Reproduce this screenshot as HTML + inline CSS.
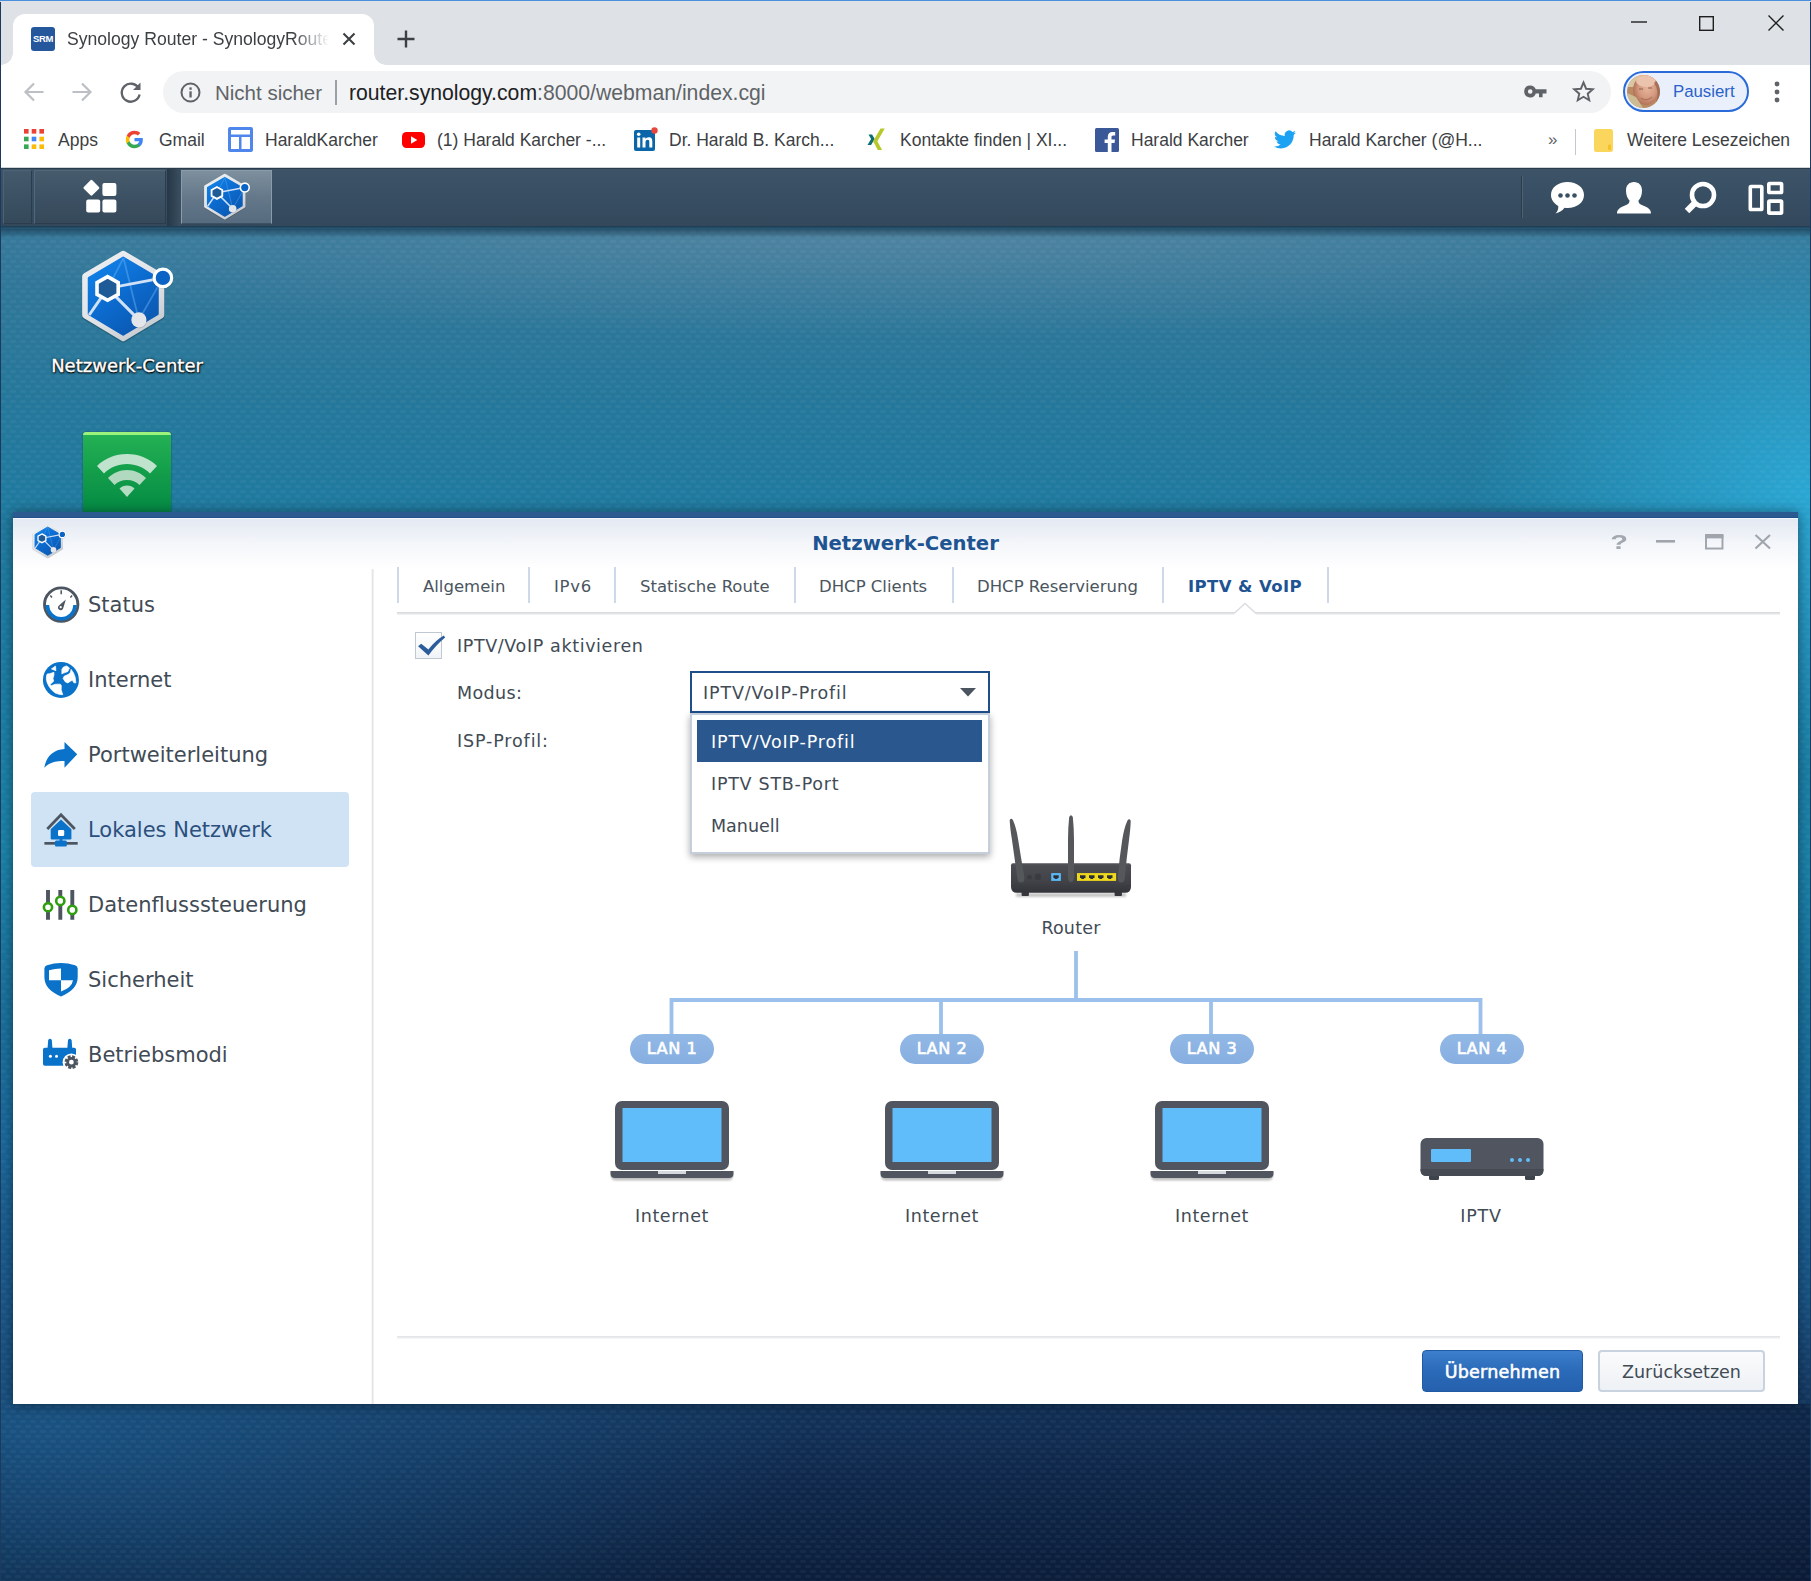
<!DOCTYPE html>
<html lang="de">
<head>
<meta charset="utf-8">
<title>Synology Router - SynologyRouter</title>
<style>
*{box-sizing:border-box;margin:0;padding:0}
html,body{width:1811px;height:1581px;overflow:hidden;background:#fff}
body{position:relative;font-family:"DejaVu Sans","Liberation Sans",sans-serif;color:#414b55}
.abs{position:absolute}
.ch{font-family:"Liberation Sans",sans-serif}
/* ---------- browser chrome ---------- */
#tabstrip{left:0;top:0;width:1811px;height:65px;background:#dee1e6;border-top:1px solid #4a8fdc}
#rightedge{right:0;top:2px;width:1px;height:1579px;background:#1c3a5e;z-index:50}
#leftedge{left:0;top:2px;width:1px;height:1579px;background:#1c3a5e;z-index:50}
#tab{left:13px;top:14px;width:361px;height:51px;background:#fff;border-radius:12px 12px 0 0}
#tab:before,#tab:after{content:"";position:absolute;bottom:0;width:12px;height:12px;background:radial-gradient(circle at 0 0,rgba(255,255,255,0) 11.5px,#fff 12px)}
#tab:before{left:-12px}
#tab:after{right:-12px;transform:scaleX(-1)}
#favicon{left:31px;top:27px;width:24px;height:24px;background:#25579c;border-radius:3px;color:#fff;font:bold 9.5px "Liberation Sans",sans-serif;text-align:center;line-height:24px;letter-spacing:-0.3px}
#tabtitle{left:67px;top:27px;width:265px;height:26px;overflow:hidden;white-space:nowrap;font-size:17.6px;line-height:24px;color:#3c4043;-webkit-mask-image:linear-gradient(90deg,#000 226px,transparent 262px);mask-image:linear-gradient(90deg,#000 226px,transparent 262px)}
#toolbar{left:0;top:65px;width:1811px;height:53px;background:#fff}
#omni{left:163px;top:71px;width:1448px;height:42px;border-radius:21px;background:#f1f3f4}
#bmbar{left:0;top:118px;width:1811px;height:50px;background:#fff;border-bottom:1px solid #d0d3d8}
.bm{top:128px;height:24px;line-height:24px;font-size:17.5px;color:#3c4043;white-space:nowrap}

/* chrome icons */
svg{position:absolute;overflow:visible}
#omnitxt1{left:215px;top:80px;font-size:20.5px;line-height:26px;color:#5f6368;white-space:nowrap}
#omnisep{left:335px;top:80px;width:2px;height:25px;background:#9aa0a6}
#omnitxt2{left:349px;top:80px;font-size:21.2px;line-height:26px;color:#202124;white-space:nowrap}
#omnitxt2 span{color:#5f6368}
#chip{left:1623px;top:71px;width:126px;height:41px;border:2px solid #2a6bd9;border-radius:21px;background:#e9effb}
#avatar{left:1627px;top:75px;width:33px;height:33px;border-radius:50%;background:radial-gradient(circle at 52% 42%,#e9b89a 0,#d99c7c 34%,#a8644a 52%,#7a5a48 70%,#c9b37a 100%);overflow:hidden}
#chiptxt{left:1673px;top:79px;font-size:16.800px;line-height:26px;color:#2a62c9;white-space:nowrap}
#bmsep{left:1575px;top:129px;width:1px;height:26px;background:#c4c7cc}
/* ---------- SRM taskbar ---------- */
#taskbar{left:0;top:168px;width:1811px;height:58px;background:linear-gradient(#3d5468,#384e62 50%,#33485b);border-top:1px solid #2a3b4a}
#taskshadow{left:0;top:226px;width:1811px;height:4px;background:linear-gradient(#1f3a4f,#2a6686)}

#tb0{left:3px;top:170px;width:29px;height:54px;background:linear-gradient(#44596b,#34495a);border:1px solid #4d6274;border-right-color:#2b3d4c;border-bottom-color:#2b3d4c}
#tb1{left:34px;top:170px;width:132px;height:54px;background:linear-gradient(#465b6c,#3b5062 55%,#35495a);border:1px solid #52687a;border-bottom-color:#2b3d4c;border-right-color:#2b3d4c}
#tbgap{left:167px;top:169px;width:14px;height:57px;background:linear-gradient(90deg,#263847,#3a4f61)}
#tb2{left:181px;top:170px;width:91px;height:54px;background:linear-gradient(#7e909e,#64788a 50%,#566b7d);border:1px solid #8a9ba9;border-bottom-color:#3c5163}
#tbsep{left:1521px;top:176px;width:2px;height:42px;background:linear-gradient(90deg,#2b3c4b 50%,#4d6274 50%)}
.dlabel{-webkit-text-stroke:.35px #fff;color:#fff;font-size:18px;line-height:22px;white-space:nowrap;text-shadow:0 1px 2px #000,0 0 3px rgba(0,0,0,.9),1px 1px 1px rgba(0,0,0,.8)}
#wifi{left:83px;top:432px;width:88px;height:83px;background:linear-gradient(#24b054,#109a49 55%,#048b44);border-top:3px solid #9df27c;border-radius:3px 3px 0 0;box-shadow:0 0 2px rgba(0,0,0,.4)}
/* ---------- desktop ---------- */
#desktop{left:0;top:229px;width:1811px;height:1352px;
background:
linear-gradient(rgba(14,40,62,.55),rgba(14,40,62,0) 9px),
radial-gradient(ellipse 3px 2px at 3px 2.5px,rgba(255,255,255,.04) 95%,rgba(255,255,255,0) 100%) 0 0/10px 10px,
radial-gradient(ellipse 3px 2px at 3px 2.5px,rgba(255,255,255,.04) 95%,rgba(255,255,255,0) 100%) 5px 5px/10px 10px,
linear-gradient(90deg,rgba(8,20,45,0) 30%,rgba(8,20,45,.42) 100%) 0 1175px/100% 177px no-repeat,
radial-gradient(ellipse 340px 280px at 1811px 265px,rgba(45,178,224,.8),rgba(45,178,224,0) 100%),
radial-gradient(ellipse 1000px 110px at 900px 0px,rgba(120,150,170,.42),rgba(120,150,170,0) 100%),
radial-gradient(ellipse 760px 300px at 40px 1200px,rgba(28,95,145,.7),rgba(28,95,145,0) 100%),
linear-gradient(180deg,#34789a 0px,#2f7799 70px,#25789b 170px,#1f7ba0 285px,#1a7ea4 470px,#1a82a8 620px,#18719b 770px,#19689a 920px,#185282 1070px,#14375f 1175px,#102b4f 1250px,#0c203d 1352px)}
/* ---------- window ---------- */
#win{left:13px;top:512px;width:1785px;height:892px;background:#fff;border-top:7px solid #2b5a90;box-shadow:0 1px 12px rgba(0,15,30,.55)}
#winhead{left:0;top:0;width:1785px;height:50px;background:linear-gradient(#e3e9f2,#f4f6fa 50%,#fff)}
#wintitle{left:0;top:12px;width:1785px;text-align:center;font-weight:bold;font-size:19.600px;line-height:26px;color:#1f5493}

#side{left:0;top:50px;width:359px;height:835px;background:#fff}
#sidediv{left:358px;top:50px;width:3px;height:835px;background:linear-gradient(90deg,#fff,#e3e5e8 50%,#f4f5f6)}
.si{left:75px;height:30px;line-height:30px;font-size:21px;color:#414b55;white-space:nowrap}
#sisel{left:18px;top:273px;width:318px;height:75px;background:#cfe3f5;border-radius:4px}
.tabs{top:54px;height:28px;line-height:28px;font-size:16.500px;color:#4a5560;white-space:nowrap}
.tsep{top:48px;width:2px;height:36px;background:#cdd8e8}
#tabline{left:384px;top:93px;width:1383px;height:3px;background:linear-gradient(#d4d7da,#e6e8ea 60%,#f6f7f8)}
#footline{left:384px;top:817px;width:1383px;height:3px;background:linear-gradient(#dfe1e4,#eceef0 60%,#f8f9fa)}
.lbl{font-size:17.500px;line-height:24px;color:#414b55;white-space:nowrap}

#cb{left:402px;top:113px;width:27px;height:27px;border:1.500px solid #bfc8d3;background:linear-gradient(#fff,#f1f4f7)}
#combo{left:677px;top:152px;width:300px;height:42px;border:2px solid #1f4e8c;background:#fff}
#ddl{left:677px;top:194px;width:300px;height:141px;background:#fff;border:2px solid #c5cfdb;box-shadow:0 3px 7px rgba(0,0,0,.33)}
#ddsel{left:684px;top:201px;width:285px;height:42px;background:#2a578e}
.pill{top:515px;width:84px;height:30px;border-radius:15px;background:linear-gradient(#92b8e5,#86aee0);color:#fff;-webkit-text-stroke:.6px #fff;font-size:16.200px;letter-spacing:.5px;line-height:30px;text-align:center;white-space:nowrap}
.dl{width:160px;text-align:center;font-size:17.500px;line-height:24px;color:#414b55;white-space:nowrap}
#btn1{left:1409px;top:831px;width:161px;height:42px;border-radius:4px;background:linear-gradient(#3d7fcc,#2a6ab8 50%,#2560ad);border:1px solid #1f5aa5;color:#fff;-webkit-text-stroke:.55px #fff;font-size:17.500px;letter-spacing:.2px;line-height:42px;text-align:center}
#btn2{left:1585px;top:831px;width:167px;height:42px;border-radius:4px;background:linear-gradient(#fafbfc,#eef1f5);border:2px solid #c9d3df;color:#414b55;font-size:17.500px;line-height:40px;text-align:center}
</style>
</head>
<body>
<!-- browser chrome -->
<div id="tabstrip" class="abs"></div>
<div id="tab" class="abs"></div>
<div id="favicon" class="abs">SRM</div>
<div id="tabtitle" class="abs ch">Synology Router - SynologyRouter</div>
<div id="toolbar" class="abs"></div>
<div id="omni" class="abs"></div>
<div id="bmbar" class="abs"></div>

<!-- tab controls -->
<svg class="abs" style="left:342px;top:32px" width="14" height="14" viewBox="0 0 14 14"><path d="M1.5 1.5L12.5 12.5M12.5 1.5L1.5 12.5" stroke="#3c4043" stroke-width="2.1" fill="none"/></svg>
<svg class="abs" style="left:397px;top:30px" width="18" height="18" viewBox="0 0 18 18"><path d="M9 0.5V17.5M0.5 9H17.5" stroke="#3c4043" stroke-width="2.4" fill="none"/></svg>
<svg class="abs" style="left:1631px;top:21px" width="16" height="2" viewBox="0 0 16 2"><path d="M0 1H16" stroke="#1f1f1f" stroke-width="1.4"/></svg>
<svg class="abs" style="left:1699px;top:16px" width="15" height="15" viewBox="0 0 15 15"><rect x="0.7" y="0.7" width="13.6" height="13.6" stroke="#1f1f1f" stroke-width="1.4" fill="none"/></svg>
<svg class="abs" style="left:1768px;top:15px" width="16" height="16" viewBox="0 0 16 16"><path d="M0.5 0.5L15.5 15.5M15.5 0.5L0.5 15.5" stroke="#1f1f1f" stroke-width="1.4" fill="none"/></svg>
<!-- nav icons -->
<svg class="abs" style="left:24px;top:82px" width="20" height="20" viewBox="0 0 20 20"><path d="M19.5 10H2.5M10 1.5L1.5 10L10 18.5" stroke="#bcc0c4" stroke-width="2.2" fill="none"/></svg>
<svg class="abs" style="left:72px;top:82px" width="20" height="20" viewBox="0 0 20 20"><path d="M0.5 10H17.5M10 1.5L18.5 10L10 18.5" stroke="#bcc0c4" stroke-width="2.2" fill="none"/></svg>
<svg class="abs" style="left:119px;top:80px" width="24" height="24" viewBox="0 0 24 24"><path d="M19.6 8.2A9 9 0 1 0 20.6 14.5" stroke="#5f6368" stroke-width="2.3" fill="none"/><path d="M21.5 2.5V10H14Z" fill="#5f6368"/></svg>
<!-- omnibox -->
<svg class="abs" style="left:180px;top:82px" width="21" height="21" viewBox="0 0 21 21"><circle cx="10.5" cy="10.5" r="9" stroke="#5f6368" stroke-width="2" fill="none"/><rect x="9.4" y="9.3" width="2.3" height="6.2" fill="#5f6368"/><rect x="9.4" y="5.4" width="2.3" height="2.4" fill="#5f6368"/></svg>
<div id="omnitxt1" class="abs ch">Nicht sicher</div>
<div id="omnisep" class="abs"></div>
<div id="omnitxt2" class="abs ch">router.synology.com<span>:8000/webman/index.cgi</span></div>
<svg class="abs" style="left:1524px;top:85px" width="23" height="13" viewBox="0 0 23 13"><path d="M6.2 0.4a6 6 0 1 0 5.6 8.2H15v3.6h3.6V8.6H22.5V4.2H11.8A6 6 0 0 0 6.2 0.4ZM6.2 4.2a2.3 2.3 0 1 1 0 4.6a2.3 2.3 0 0 1 0-4.6Z" fill="#5f6368" fill-rule="evenodd"/></svg>
<svg class="abs" style="left:1572px;top:80px" width="23" height="23" viewBox="0 0 24 24"><path d="M12 2.6l2.7 6.5 7 .6-5.3 4.6 1.6 6.9L12 17.5l-6 3.7 1.6-6.9L2.3 9.7l7-.6z" stroke="#5f6368" stroke-width="2" fill="none" stroke-linejoin="miter"/></svg>
<div id="chip" class="abs"></div>
<svg class="abs" style="left:1627px;top:75px" width="33" height="33" viewBox="0 0 33 33"><defs><clipPath id="avc"><circle cx="16.500" cy="16.500" r="16.500"/></clipPath><radialGradient id="avg" cx=".55" cy=".45" r=".6"><stop offset="0" stop-color="#e6b49a"/><stop offset=".55" stop-color="#d49a80"/><stop offset="1" stop-color="#a9694f"/></radialGradient></defs><g clip-path="url(#avc)"><rect width="33" height="33" fill="#b98a63"/><rect x="0" y="0" width="33" height="12" fill="#d8c7a0"/><ellipse cx="19" cy="15" rx="13" ry="15" fill="url(#avg)"/><ellipse cx="19" cy="6" rx="10" ry="6" fill="#ecc4ad"/><path d="M0 18L9 22L16 33H0Z" fill="#cdbb94"/><path d="M14 23Q19 27 25 22" stroke="#9a5a4a" stroke-width="1.300" fill="none" opacity=".55"/><path d="M12 14h4M21 13h4" stroke="#7a4a3c" stroke-width="1.500" opacity=".5"/><path d="M27 8Q33 16 29 27L33 33V0Z" fill="#8c5a48" opacity=".6"/></g></svg>
<div id="chiptxt" class="abs ch">Pausiert</div>
<svg class="abs" style="left:1774px;top:81px" width="6" height="22" viewBox="0 0 6 22"><circle cx="3" cy="3" r="2.4" fill="#5f6368"/><circle cx="3" cy="11" r="2.4" fill="#5f6368"/><circle cx="3" cy="19" r="2.4" fill="#5f6368"/></svg>
<!-- bookmarks -->
<svg class="abs" style="left:24px;top:129px" width="20" height="20" viewBox="0 0 20 20"><g><rect x="0" y="0" width="4.6" height="4.6" fill="#ea4335"/><rect x="7.7" y="0" width="4.6" height="4.6" fill="#ea4335"/><rect x="15.4" y="0" width="4.6" height="4.6" fill="#ea4335"/><rect x="0" y="7.7" width="4.6" height="4.6" fill="#34a853"/><rect x="7.7" y="7.7" width="4.6" height="4.6" fill="#4285f4"/><rect x="15.4" y="7.7" width="4.6" height="4.6" fill="#fbbc05"/><rect x="0" y="15.4" width="4.6" height="4.6" fill="#34a853"/><rect x="7.7" y="15.4" width="4.6" height="4.6" fill="#fbbc05"/><rect x="15.4" y="15.4" width="4.6" height="4.6" fill="#fbbc05"/></g></svg>
<div class="abs bm ch" style="left:58px">Apps</div>
<svg class="abs" style="left:125px;top:130px" width="19" height="19" viewBox="0 0 48 48"><path fill="#4285f4" d="M45.1 24.5c0-1.6-.1-3.100-.4-4.500H24v8.500h11.800c-.5 2.800-2.100 5.100-4.400 6.700v5.500h7.100c4.200-3.800 6.600-9.500 6.600-16.200z"/><path fill="#34a853" d="M24 46c5.900 0 10.900-2 14.500-5.300l-7.100-5.500c-2 1.300-4.500 2.100-7.400 2.100-5.700 0-10.500-3.800-12.300-9H4.400v5.700C8 41.100 15.400 46 24 46z"/><path fill="#fbbc05" d="M11.700 28.300c-.4-1.300-.7-2.800-.7-4.300s.3-2.900.7-4.300v-5.700H4.400C2.900 17 2 20.400 2 24s.9 7 2.400 10l7.300-5.700z"/><path fill="#ea4335" d="M24 10.700c3.200 0 6.100 1.100 8.400 3.300l6.300-6.300C34.900 4.200 29.900 2 24 2 15.400 2 8 6.900 4.400 14l7.300 5.700c1.800-5.200 6.600-9 12.300-9z"/></svg>
<div class="abs bm ch" style="left:159px">Gmail</div>
<svg class="abs" style="left:228px;top:127px" width="25" height="25" viewBox="0 0 25 25"><rect x="0" y="0" width="25" height="25" rx="2" fill="#4f86ec"/><rect x="3" y="3" width="19" height="4.5" fill="#fff"/><rect x="3" y="10" width="8" height="12" fill="#fff"/><rect x="13.5" y="10" width="8.500" height="12" fill="#fff"/></svg>
<div class="abs bm ch" style="left:265px">HaraldKarcher</div>
<svg class="abs" style="left:402px;top:132px" width="23" height="16" viewBox="0 0 23 16"><rect width="23" height="16" rx="4.500" fill="#ff0000"/><path d="M9 4.200L15.300 8L9 11.800Z" fill="#fff"/></svg>
<div class="abs bm ch" style="left:437px">(1) Harald Karcher -...</div>
<svg class="abs" style="left:634px;top:127px" width="24" height="24" viewBox="0 0 24 24"><rect x="0" y="3" width="21" height="21" rx="2" fill="#0a66a8"/><rect x="3.200" y="10.500" width="3" height="10" fill="#fff"/><circle cx="4.700" cy="7.300" r="1.800" fill="#fff"/><path d="M8.500 10.500h2.900v1.500c.6-1.100 1.900-1.800 3.400-1.800 3 0 3.500 2 3.500 4.300v6h-3v-5.300c0-1.300-.1-2.500-1.600-2.500s-2.200 1.100-2.200 2.500v5.300h-3z" fill="#fff"/><circle cx="20.500" cy="3.500" r="3.200" fill="#e8453c"/></svg>
<div class="abs bm ch" style="left:669px">Dr. Harald B. Karch...</div>
<svg class="abs" style="left:865px;top:128px" width="22" height="24" viewBox="0 0 22 24"><path d="M3.500 6.500h3.600l2.600 4.400-3.600 6.200H2.500l3.600-6.200z" fill="#0d6e72"/><path d="M15.500 0.500h4.300l-7.400 12.800 4.700 8.700h-4.300l-4.700-8.700z" fill="#b7c92a"/></svg>
<div class="abs bm ch" style="left:900px">Kontakte finden | XI...</div>
<svg class="abs" style="left:1095px;top:128px" width="24" height="24" viewBox="0 0 24 24"><rect width="24" height="24" rx="1.500" fill="#3b5998"/><path d="M16.500 24v-9h3l.5-3.600h-3.500V9.200c0-1 .3-1.800 1.800-1.800h1.900V4.200c-.3 0-1.500-.1-2.800-.1-2.800 0-4.600 1.700-4.600 4.700v2.600H9.600V15h3.200v9z" fill="#fff"/></svg>
<div class="abs bm ch" style="left:1131px">Harald Karcher</div>
<svg class="abs" style="left:1274px;top:130px" width="22" height="19" viewBox="0 0 24 20"><path d="M24 2.400a9.800 9.800 0 0 1-2.800.8A4.900 4.900 0 0 0 23.300.500a9.800 9.800 0 0 1-3.100 1.200 4.900 4.900 0 0 0-8.400 4.500A14 14 0 0 1 1.700 1 4.900 4.900 0 0 0 3.200 7.600a4.900 4.900 0 0 1-2.200-.6v.1a4.900 4.900 0 0 0 3.900 4.800 4.900 4.900 0 0 1-2.200.1 4.900 4.900 0 0 0 4.600 3.400A9.900 9.900 0 0 1 0 17.500a14 14 0 0 0 7.500 2.200c9.100 0 14-7.500 14-14v-.6A10 10 0 0 0 24 2.400z" fill="#1da1f2"/></svg>
<div class="abs bm ch" style="left:1309px">Harald Karcher (@H...</div>
<div class="abs bm ch" style="left:1548px;font-size:17px;color:#5f6368">»</div>
<div id="bmsep" class="abs"></div>
<svg class="abs" style="left:1594px;top:129px" width="19" height="23" viewBox="0 0 19 23"><path d="M2.500 0H16.500a2.500 2.500 0 0 1 2.500 2.500V20.500a2.500 2.500 0 0 1-2.500 2.500H2.500A2.500 2.500 0 0 1 0 20.500V2.500A2.500 2.500 0 0 1 2.500 0Z" fill="#fbd65c"/><rect x="14" y="15.500" width="3" height="5.500" rx="1" fill="#f6c02d"/></svg>
<div class="abs bm ch" style="left:1627px">Weitere Lesezeichen</div>
<!-- SRM -->
<div id="taskbar" class="abs"></div>
<div id="taskshadow" class="abs"></div>
<div id="desktop" class="abs"></div>
<svg width="0" height="0" style="position:absolute"><symbol id="hex" viewBox="78 247 98 98">
<defs><linearGradient id="hg" x1="0.1" y1="0" x2="0.8" y2="1"><stop offset="0" stop-color="#1184ea"/><stop offset="0.5" stop-color="#0c6bcf"/><stop offset="1" stop-color="#0b56ad"/></linearGradient>
<linearGradient id="hb" x1="0.2" y1="0" x2="0.8" y2="1"><stop offset="0" stop-color="#eceef0"/><stop offset="0.6" stop-color="#dfe2e5"/><stop offset="1" stop-color="#c4c9ce"/></linearGradient></defs>
<path d="M123.200 254L161 276.300V315.300L123.200 338L85.400 315.300V276.300Z" fill="#000" opacity=".18" stroke="#000" stroke-width="7" stroke-linejoin="round" transform="translate(0 1.200)"/>
<path d="M123.200 254L161 276.300V315.300L123.200 338L85.400 315.300V276.300Z" fill="url(#hb)" stroke="url(#hb)" stroke-width="6.500" stroke-linejoin="round"/>
<path d="M123.200 257.800L157.500 278V314L123.200 334.500L89 314V278Z" fill="url(#hg)" stroke="url(#hg)" stroke-width="2.500" stroke-linejoin="round"/>
<path d="M123.500 258L107.600 288.400M123.500 258L138.900 319.900L162.900 277.900" stroke="#5aa6f0" stroke-width="1.800" fill="none" opacity=".55"/>
<path d="M107.600 288.400L162.900 277.900M107.600 288.400L138.900 319.900M107.600 288.400L89.200 315" stroke="#cfe1f7" stroke-width="3" fill="none"/>
<path d="M107.600 276.600L118.200 282.600V294.400L107.600 300.300L97 294.400V282.600Z" fill="#1f5b96" stroke="#fff" stroke-width="3.600" stroke-linejoin="miter"/>
<circle cx="162.900" cy="278.500" r="10.600" fill="#000" opacity=".15"/>
<circle cx="162.900" cy="277.900" r="8.800" fill="#0b64c5" stroke="#fff" stroke-width="3.200"/>
<circle cx="139.200" cy="320.600" r="7.800" fill="#000" opacity=".15"/>
<circle cx="138.900" cy="319.900" r="7.600" fill="#e2e6ea"/>
</symbol></svg>
<div id="tb0" class="abs"></div>
<div id="tb1" class="abs"></div>
<div id="tbgap" class="abs"></div>
<div id="tb2" class="abs"></div>
<svg class="abs" style="left:82px;top:178px" width="36" height="36" viewBox="0 0 36 36"><rect x="-6" y="-6" width="12" height="12" rx="1.300" transform="translate(9.400 9.800) rotate(45)" fill="#fff"/><rect x="20.400" y="5" width="14" height="13" rx="2" fill="#fff"/><rect x="4.200" y="21.500" width="14" height="13" rx="2" fill="#fff"/><rect x="20.400" y="21.500" width="14" height="13" rx="2" fill="#fff"/></svg>
<svg class="abs" style="left:201.800px;top:171.900px" width="49.400" height="49.400"><use href="#hex"/></svg>
<div id="tbsep" class="abs"></div>
<!-- tray icons -->
<svg class="abs" style="left:1550px;top:181px" width="35" height="34" viewBox="0 0 35 34"><path d="M17.500 1C27 1 34 6.500 34 14C34 21.500 27 27 17.500 27C16.500 27 15.500 26.900 14.500 26.800C12.500 29.500 9.500 31.500 5.500 32.500C7.500 30.500 8.500 28 8.300 25C3.800 22.500 1 18.500 1 14C1 6.500 8 1 17.500 1Z" fill="#fff"/><circle cx="10.500" cy="14.500" r="2.300" fill="#3a5063"/><circle cx="17.500" cy="14.500" r="2.300" fill="#3a5063"/><circle cx="24.500" cy="14.500" r="2.300" fill="#3a5063"/></svg>
<svg class="abs" style="left:1616px;top:181px" width="36" height="33" viewBox="0 0 36 33"><path d="M18 1C23 1 26 4.500 26 9.500C26 14 24.500 17.500 22.500 19.500C22.500 22 23.500 23 27 24.500C32 26.500 35 28.500 35 32.500H1C1 28.500 4 26.500 9 24.500C12.500 23 13.500 22 13.500 19.500C11.500 17.500 10 14 10 9.500C10 4.500 13 1 18 1Z" fill="#fff"/></svg>
<svg class="abs" style="left:1682px;top:180px" width="36" height="36" viewBox="0 0 36 36"><circle cx="21" cy="15" r="11" stroke="#fff" stroke-width="4.600" fill="none"/><path d="M13 23L5 31" stroke="#fff" stroke-width="6.400" stroke-linecap="butt"/></svg>
<svg class="abs" style="left:1747px;top:180px" width="38" height="36" viewBox="1747 180 38 36"><rect x="1750.300" y="186.500" width="11.500" height="23" rx=".8" stroke="#fff" stroke-width="3.600" fill="none"/><rect x="1768.800" y="183.500" width="12.800" height="9" rx=".8" stroke="#fff" stroke-width="3.600" fill="none"/><rect x="1768.800" y="201.100" width="12.800" height="12" rx=".8" stroke="#fff" stroke-width="3.600" fill="none"/></svg>
<!-- desktop icons -->
<svg class="abs" style="left:78px;top:247px" width="98" height="98"><use href="#hex"/></svg>
<div class="abs dlabel" style="left:27px;top:355px;width:200px;text-align:center">Netzwerk-Center</div>
<div id="wifi" class="abs"></div>
<svg class="abs" style="left:96px;top:452px" width="62" height="46" viewBox="0 0 62 46"><path d="M31 2C43 2 53.500 6.500 61 14L54 21.500C48 15.500 40 12 31 12C22 12 14 15.500 8 21.500L1 14C8.500 6.500 19 2 31 2Z" fill="#bfe3cc"/><path d="M31 18C38.500 18 45 21 50 26L43.500 33C40 29.500 36 28 31 28C26 28 22 29.500 18.500 33L12 26C17 21 23.500 18 31 18Z" fill="#b0d9c0"/><path d="M31 33.500Q35.500 33.500 38.500 36.500L31 45L23.500 36.500Q26.500 33.500 31 33.500Z" fill="#b4dcc3"/></svg>

<div id="win" class="abs">
  <div id="winhead" class="abs"></div>
  <div class="abs" style="left:0;top:-2px;width:1785px;height:1px;background:#214f89"></div><div class="abs" style="left:0;top:-1px;width:1785px;height:1px;background:#f4f6fa"></div>
  <div id="wintitle" class="abs">Netzwerk-Center</div>
  <svg class="abs" style="left:17.900px;top:3.900px" width="36.200" height="36.200"><use href="#hex"/></svg>
  <!-- window controls -->
  <div class="abs" style="left:1599px;top:11px;width:14px;text-align:center;font-size:20px;font-weight:bold;line-height:24px;color:#a3a8b0;font-family:'Liberation Sans',sans-serif;transform:scaleX(1.45)">?</div>
  <svg class="abs" style="left:1643px;top:21px" width="19" height="3" viewBox="0 0 19 3"><rect width="19" height="2.600" fill="#a0a5ad"/></svg>
  <svg class="abs" style="left:1691.500px;top:15px" width="18.500" height="15.500" viewBox="0 0 19 16"><rect x="1" y="2" width="17" height="13" stroke="#a0a5ad" stroke-width="2" fill="none"/><rect x="0" y="0" width="19" height="4.500" fill="#a0a5ad"/></svg>
  <svg class="abs" style="left:1740.500px;top:15px" width="17.500" height="15.500" viewBox="0 0 17 16"><path d="M1 1L16 15M16 1L1 15" stroke="#a0a5ad" stroke-width="2.200" fill="none"/></svg>
  <!-- sidebar -->
  <div id="side" class="abs"></div>
  <div id="sidediv" class="abs"></div>
  <div id="sisel" class="abs"></div>
  <div class="abs si" style="top:71px">Status</div>
  <div class="abs si" style="top:146px">Internet</div>
  <div class="abs si" style="top:221px">Portweiterleitung</div>
  <div class="abs si" style="top:296px;color:#2c4f7c">Lokales Netzwerk</div>
  <div class="abs si" style="top:371px">Datenflusssteuerung</div>
  <div class="abs si" style="top:446px">Sicherheit</div>
  <div class="abs si" style="top:521px">Betriebsmodi</div>
  <!-- sidebar icons -->
<svg class="abs" style="left:28px;top:66px" width="40" height="40" viewBox="41 585 40 40"><circle cx="61.200" cy="604.600" r="16.700" stroke="#4d5660" stroke-width="2.900" fill="#fff"/><path d="M47.400 605A13.800 13.800 0 0 0 75 605" stroke="#0a72c9" stroke-width="3.700" fill="none"/><path d="M61.200 590.200V594.300M50.300 595.600L52 597.500M72.100 595.600L70.400 597.500" stroke="#4d5660" stroke-width="1.500"/><path d="M65.800 599.500L63.300 608a2.700 2.700 0 1 1-4.300-2.600Z" fill="#4d5660"/><circle cx="60.700" cy="607.200" r="1.100" fill="#fff"/></svg>
<svg class="abs" style="left:28px;top:141px" width="40" height="40" viewBox="41 660 40 40"><circle cx="60.93" cy="679.98" r="18" fill="#0a72c9"/><g fill="#fff" stroke="#fff" stroke-width=".7" stroke-linejoin="round"><path d="M51.45 668.92L55.56 666.07L55.87 670.65Z"/><path d="M47.18 673.98L49.55 673.66L53.98 672.33L53.91 675.24L52.96 678.72L53.72 680.93L52.08 682.83L50.12 684.25L51.13 685.74L55.24 684.25L60.30 684.16L61.31 685.52L61.19 689.79L62.77 694.69L59.04 694.37L55.24 692.95L51.76 690.10L48.92 686.31L47.18 682.83L46.32 679.04L46.54 675.87Z"/><path d="M61.88 673.98L61.88 669.23L63.46 667.02L66.63 665.91L69.47 667.97L68.59 669.86L67.89 671.51L63.46 673.09Z"/><path d="M71.05 669.39L73.43 672.71L75.16 677.14L75.86 682.83L73.96 682.83L72.32 680.30L70.74 681.00L67.89 682.89L65.36 681.88L63.08 678.47L64.10 676.25L68.52 674.35L70.48 672.24Z"/></g></svg>
<svg class="abs" style="left:29px;top:219px" width="40" height="34" viewBox="42 738 40 34"><path d="M64.500 742.100L77.200 754.300L64.500 767.800V761C55 760.500 49 763 44.300 767.700C46 757 53 749.500 64.500 749Z" fill="#0a72c9"/></svg>
<svg class="abs" style="left:29px;top:291px" width="40" height="40" viewBox="42 810 40 40"><path d="M47.300 828.900L61 814.800L74.800 828.900" stroke="#4d5660" stroke-width="2.800" fill="none"/><path d="M50.700 829.200L61 819.600L71.400 829.200V838.200Q71.400 839.600 70 839.600H52.100Q50.700 839.600 50.700 838.200Z" fill="#0a72c9"/><rect x="58" y="830" width="6.200" height="6" rx="1.300" fill="#fff"/><rect x="44.400" y="842" width="33.300" height="2.700" fill="#4d5660"/><rect x="59.600" y="839" width="2.800" height="3.500" fill="#0a72c9"/><rect x="54.900" y="840.600" width="12" height="6" rx="1.500" fill="#0a72c9"/></svg>
<svg class="abs" style="left:27px;top:367px" width="40" height="38" viewBox="40 886 40 38"><path d="M48 890V919.800M60.300 890V919.800M72.300 890V919.800" stroke="#4d5660" stroke-width="3.900"/><circle cx="48" cy="907.200" r="4.100" fill="#fff" stroke="#2f9e0f" stroke-width="2.600"/><circle cx="60.300" cy="900.900" r="4.100" fill="#fff" stroke="#2f9e0f" stroke-width="2.600"/><circle cx="72.300" cy="909.900" r="4.100" fill="#fff" stroke="#2f9e0f" stroke-width="2.600"/></svg>
<svg class="abs" style="left:29px;top:441px" width="40" height="40" viewBox="42 960 40 40"><path d="M44.400 968.500Q44.400 966 47 965.300Q54 963 61 963Q68 963 75.100 965.300Q77.700 966 77.700 968.500V977C77.700 986 71.500 992 61 996.400C50.600 992 44.400 986 44.400 977Z" fill="#0a72c9"/><path d="M49 970.300Q55 968.600 61 968.600V980.300H49Z" fill="#fff"/><path d="M61 980.300H73Q72 987.500 61 991.600Z" fill="#fff"/></svg>
<svg class="abs" style="left:28px;top:517px" width="40" height="36" viewBox="41 1036 40 36"><path d="M48.200 1040Q50 1037.500 51.800 1040L52.600 1050H47.400Z" fill="#0a72c9"/><path d="M68 1040Q69.800 1037.500 71.600 1040L72.400 1050H67.200Z" fill="#0a72c9"/><rect x="43" y="1047.700" width="33" height="18.100" rx="1.800" fill="#0a72c9"/><circle cx="50.400" cy="1056.200" r="1.500" fill="#fff"/><circle cx="56.500" cy="1056.200" r="1.500" fill="#fff"/><circle cx="71.400" cy="1062.200" r="8.800" fill="#fff"/><circle cx="71.400" cy="1062.200" r="5.600" stroke="#4d5660" stroke-width="2.600" fill="none" stroke-dasharray="2.930 1.470" /><circle cx="71.400" cy="1062.200" r="3.800" stroke="#4d5660" stroke-width="2.800" fill="#fff"/></svg>
  <!-- tabs -->
  <div class="abs tsep" style="left:384px"></div>
  <div class="abs tabs" style="left:410px">Allgemein</div>
  <div class="abs tsep" style="left:515px"></div>
  <div class="abs tabs" style="left:541px;letter-spacing:.7px">IPv6</div>
  <div class="abs tsep" style="left:601px"></div>
  <div class="abs tabs" style="left:627px">Statische Route</div>
  <div class="abs tsep" style="left:781px"></div>
  <div class="abs tabs" style="left:806px">DHCP Clients</div>
  <div class="abs tsep" style="left:939px"></div>
  <div class="abs tabs" style="left:964px">DHCP Reservierung</div>
  <div class="abs tsep" style="left:1149px"></div>
  <div class="abs tabs" style="left:1175px;font-weight:bold;color:#1f5493;letter-spacing:.4px">IPTV &amp; VoIP</div>
  <div class="abs tsep" style="left:1314px"></div>
  <div id="tabline" class="abs"></div>
  <svg class="abs" style="left:1221px;top:84px" width="22" height="12" viewBox="0 0 22 12"><path d="M0 10.500L11 0.500L22 10.500V12H0Z" fill="#fff"/><path d="M0 10.500L11 0.500L22 10.500" stroke="#d9dcdf" stroke-width="1.400" fill="none"/></svg>
  <div id="footline" class="abs"></div>
  <svg width="0" height="0" style="position:absolute"><symbol id="laptop" viewBox="0 0 124 82"><defs><filter id="lsh" x="-5%" y="-5%" width="110%" height="120%"><feGaussianBlur stdDeviation="0.800"/></filter></defs>
<path d="M1 71H123V74Q123 79 118 79H6Q1 79 1 74Z" fill="#000" opacity=".25" filter="url(#lsh)" transform="translate(0 1.500)"/>
<rect x="5" y="1" width="114" height="69" rx="7" fill="#50555f"/>
<rect x="12.500" y="8" width="99" height="54" fill="#61bcfa"/>
<path d="M0.500 71H123.500V73.500Q123.500 78 119 78H5Q0.500 78 0.500 73.500Z" fill="#50555f"/>
<rect x="48" y="71" width="28" height="3" fill="#d5d8dc"/></symbol></svg>
  <!-- form -->
  <div id="cb" class="abs"></div>
  <svg class="abs" style="left:402px;top:113px" width="34" height="28" viewBox="415 632 34 28"><path d="M418.100 646.300L421.200 643.700L428.400 649.600Q435.300 640.300 443.900 635.500L445.100 637.400Q435.300 645.600 428.400 655.500Z" fill="#2b5c9b"/></svg>
  <div class="abs lbl" style="left:444px;top:115px;letter-spacing:.62px">IPTV/VoIP aktivieren</div>
  <div class="abs lbl" style="left:444px;top:162px;letter-spacing:.4px">Modus:</div>
  <div class="abs lbl" style="left:444px;top:210px;letter-spacing:.87px">ISP-Profil:</div>
  <div id="combo" class="abs"></div>
  <div class="abs lbl" style="left:690px;top:162px;letter-spacing:.85px">IPTV/VoIP-Profil</div>
  <svg class="abs" style="left:947px;top:169px" width="16" height="9" viewBox="0 0 16 9"><path d="M0 0H16L8 8.500Z" fill="#4a5560"/></svg>
  <div id="ddl" class="abs"></div>
  <div id="ddsel" class="abs"></div>
  <div class="abs lbl" style="left:698px;top:211px;color:#fff;letter-spacing:.85px">IPTV/VoIP-Profil</div>
  <div class="abs lbl" style="left:698px;top:253px;letter-spacing:.73px">IPTV STB-Port</div>
  <div class="abs lbl" style="left:698px;top:295px">Manuell</div>
  <!-- router -->
  <svg class="abs" style="left:996px;top:294px" width="124" height="88" viewBox="1009 813 124 88">
    <defs><linearGradient id="rb" x1="0" y1="0" x2="0" y2="1"><stop offset="0" stop-color="#53565c"/><stop offset=".1" stop-color="#4a4c52"/><stop offset=".6" stop-color="#414349"/><stop offset="1" stop-color="#33343a"/></linearGradient>
    <filter id="rsh" x="-10%" y="-100%" width="120%" height="300%"><feGaussianBlur stdDeviation="1.200"/></filter></defs>
    <rect x="1016" y="893" width="110" height="4" fill="#000" opacity=".22" filter="url(#rsh)"/>
    <rect x="1021.600" y="890" width="7.300" height="6" rx=".8" fill="#36373c"/><rect x="1114.600" y="890" width="7.300" height="6" rx=".8" fill="#36373c"/>
    <path d="M1011 865.200Q1011 863.200 1013 863.200H1129Q1131 863.200 1131 865.200V886.800Q1131 892.800 1125 892.800H1017Q1011 892.800 1011 886.800Z" fill="url(#rb)"/>
    <path d="M1009.700 820Q1011.300 817.500 1012.900 820Q1016.500 828 1018.200 840Q1021 858 1024.400 877Q1024.800 882.500 1021 882.500Q1017.600 882.500 1017.200 877Q1014.500 858 1012 840Q1010 828 1009.700 820Z" fill="#55575b"/>
    <path d="M1069.200 817Q1071 813.500 1072.800 817Q1074 828 1074 840V877Q1074 882 1071 882Q1068 882 1068 877V840Q1068 828 1069.200 817Z" fill="#55575b"/>
    <path d="M1130.700 820.500Q1129.100 818 1127.500 820.500Q1124 828 1122.200 840Q1119.400 858 1117.800 877Q1117.400 882.500 1121.200 882.500Q1124.600 882.500 1125 877Q1126.500 858 1129 840Q1130.600 828 1130.700 820.500Z" fill="#55575b"/>
    <circle cx="1029.600" cy="877.300" r="2.300" fill="#3a3b40"/><rect x="1035" y="873.800" width="5.800" height="6.200" rx="1.500" fill="#3a3b40"/>
    <rect x="1051.200" y="873.100" width="9.700" height="7.800" fill="#5bb8f5"/><path d="M1053.400 875.200H1058.700V878H1057.400V879H1054.700V878H1053.400Z" fill="#2b2d35"/>
    <rect x="1077" y="873.100" width="39.100" height="7.800" fill="#efd91c"/>
    <g fill="#2b2d35"><path d="M1080 875.200H1085.500V878H1084.200V879H1081.300V878H1080Z"/><path d="M1089 875.200H1094.500V878H1093.200V879H1090.300V878H1089Z"/><path d="M1098 875.200H1103.500V878H1102.200V879H1099.300V878H1098Z"/><path d="M1107 875.200H1112.500V878H1111.200V879H1108.300V878H1107Z"/></g>
  </svg>
  <div class="abs dl" style="left:978px;top:397px;letter-spacing:.2px">Router</div>
  <!-- lines -->
  <svg class="abs" style="left:650px;top:430px" width="840" height="96" viewBox="0 0 840 96"><path d="M413 2V51M8.500 94V51H817.500V94M278 51V94M548 51V94" stroke="#9cc0ec" stroke-width="3.800" fill="none"/></svg>
  <div class="abs pill" style="left:617px">LAN 1</div>
  <div class="abs pill" style="left:887px">LAN 2</div>
  <div class="abs pill" style="left:1157px">LAN 3</div>
  <div class="abs pill" style="left:1427px">LAN 4</div>
  <svg class="abs" style="left:597px;top:581px" width="124" height="82"><use href="#laptop"/></svg>
  <svg class="abs" style="left:867px;top:581px" width="124" height="82"><use href="#laptop"/></svg>
  <svg class="abs" style="left:1137px;top:581px" width="124" height="82"><use href="#laptop"/></svg>
  <svg class="abs" style="left:1406px;top:618px" width="126" height="46" viewBox="0 0 126 46">
    <rect x="10" y="37" width="10" height="6" rx="1.500" fill="#3f434b"/><rect x="106" y="37" width="10" height="6" rx="1.500" fill="#3f434b"/>
    <rect x="1.500" y="1" width="123" height="38" rx="6" fill="#50555f"/>
    <path d="M1.500 32H124.500V33Q124.500 39 118.500 39H7.500Q1.500 39 1.500 33Z" fill="#464a53"/>
    <rect x="12" y="12" width="40" height="13" rx="1" fill="#61bcfa"/>
    <circle cx="93" cy="23" r="2" fill="#61bcfa"/><circle cx="101" cy="23" r="2" fill="#61bcfa"/><circle cx="109" cy="23" r="2" fill="#61bcfa"/>
  </svg>
  <div class="abs dl" style="left:579px;top:685px;letter-spacing:.55px">Internet</div>
  <div class="abs dl" style="left:849px;top:685px;letter-spacing:.55px">Internet</div>
  <div class="abs dl" style="left:1119px;top:685px;letter-spacing:.55px">Internet</div>
  <div class="abs dl" style="left:1388px;top:685px;letter-spacing:.8px">IPTV</div>
  <div id="btn1" class="abs">Übernehmen</div>
  <div id="btn2" class="abs">Zurücksetzen</div>


</div>
<div id="leftedge" class="abs"></div>
<div id="rightedge" class="abs"></div>
</body>
</html>
